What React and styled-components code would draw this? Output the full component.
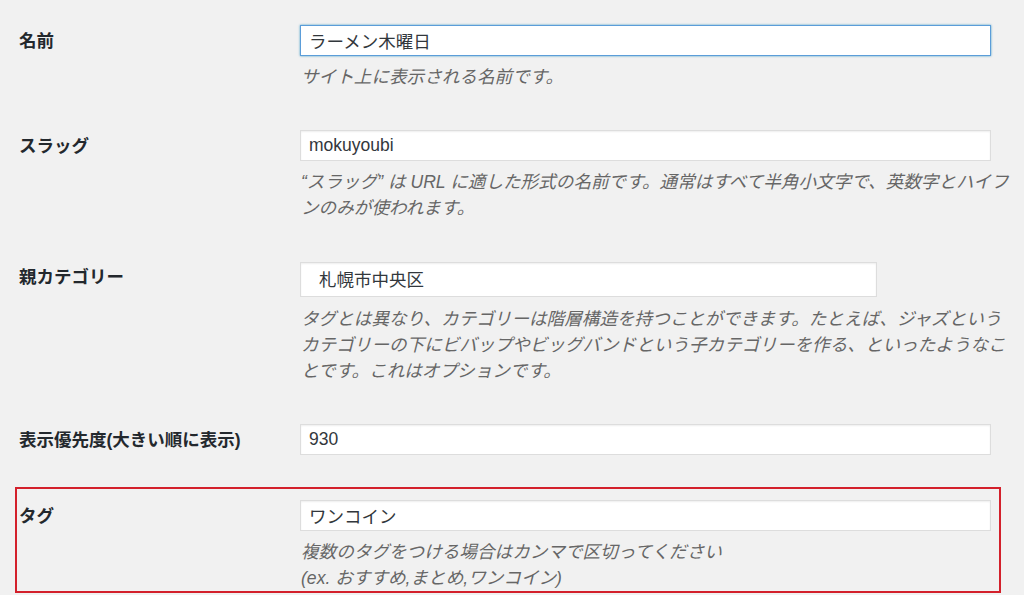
import React from "react";
import styled, { createGlobalStyle } from "styled-components";

const GlobalStyle = createGlobalStyle`
  html, body {
    margin: 0;
    padding: 0;
    background-color: #f1f1f1;
  }
  body {
    font-family: "Liberation Sans", "Noto Sans CJK JP", sans-serif;
    color: #23282d;
  }
`;

const Page = styled.div`
  width: 1024px;
  height: 595px;
  overflow: hidden;
  padding: 5px 0 0 19px;
  box-sizing: border-box;
  background-color: #f1f1f1;
`;

const Row = styled.div`
  display: flex;
  align-items: flex-start;
  padding: 20px 0;
`;

const HighlightRow = styled(Row)`
  width: 986px;
  box-sizing: border-box;
  margin: 11px 0 0 -4px;
  padding: 11px 0 0 2px;
  border: 2px solid #d3202b;
`;

const Label = styled.div`
  width: 281px;
  flex-shrink: 0;
  font-size: 17.5px;
  font-weight: bold;
  line-height: 31px;
  padding-top: 1px;
  color: #23282d;
`;

const Field = styled.div`
  width: 724px;
  display: flex;
  flex-direction: column;
  align-items: flex-start;
`;

const TextInput = styled.input`
  width: 691px;
  height: 31px;
  box-sizing: border-box;
  margin: 0;
  padding: 0 8px;
  font-family: "Liberation Sans", "Noto Sans CJK JP", sans-serif;
  font-size: 17.5px;
  color: #32373c;
  background-color: #fff;
  border: 1px solid ${(p) => (p.$focused ? "#5b9dd9" : "#dddddd")};
  box-shadow: ${(p) =>
    p.$focused
      ? "0 0 2px rgba(30, 140, 190, 0.8)"
      : "inset 0 1px 2px rgba(0, 0, 0, 0.07)"};
  outline: none;
`;

const Select = styled.select`
  width: 577px;
  height: 35px;
  box-sizing: border-box;
  margin: 1px 0;
  padding: 0 0 0 18px;
  font-family: "Liberation Sans", "Noto Sans CJK JP", sans-serif;
  font-size: 17.5px;
  color: #32373c;
  background-color: #fff;
  border: 1px solid #dddddd;
  box-shadow: inset 0 1px 2px rgba(0, 0, 0, 0.07);
  border-radius: 0;
  appearance: none;
  outline: none;
`;

const Description = styled.p`
  margin: 8px 0 0 1px;
  font-size: 17.6px;
  line-height: 26px;
  font-style: italic;
  color: #666666;
  white-space: nowrap;
`;

const App = () => {
  return (
    <>
      <GlobalStyle />
      <Page>
        <Row>
          <Label>名前</Label>
          <Field>
            <TextInput $focused defaultValue="ラーメン木曜日" />
            <Description>サイト上に表示される名前です。</Description>
          </Field>
        </Row>
        <Row>
          <Label>スラッグ</Label>
          <Field>
            <TextInput defaultValue="mokuyoubi" />
            <Description>
              “スラッグ” は URL に適した形式の名前です。通常はすべて半角小文字で、英数字とハイフ
              <br />
              ンのみが使われます。
            </Description>
          </Field>
        </Row>
        <Row>
          <Label>親カテゴリー</Label>
          <Field>
            <Select defaultValue="chuo">
              <option value="chuo">札幌市中央区</option>
            </Select>
            <Description>
              タグとは異なり、カテゴリーは階層構造を持つことができます。たとえば、ジャズという
              <br />
              カテゴリーの下にビバップやビッグバンドという子カテゴリーを作る、といったようなこ
              <br />
              とです。これはオプションです。
            </Description>
          </Field>
        </Row>
        <Row>
          <Label>表示優先度(大きい順に表示)</Label>
          <Field>
            <TextInput defaultValue="930" />
          </Field>
        </Row>
        <HighlightRow>
          <Label>タグ</Label>
          <Field>
            <TextInput defaultValue="ワンコイン" />
            <Description>
              複数のタグをつける場合はカンマで区切ってください
              <br />
              (ex. おすすめ,まとめ,ワンコイン)
            </Description>
          </Field>
        </HighlightRow>
      </Page>
    </>
  );
};

export default App;
